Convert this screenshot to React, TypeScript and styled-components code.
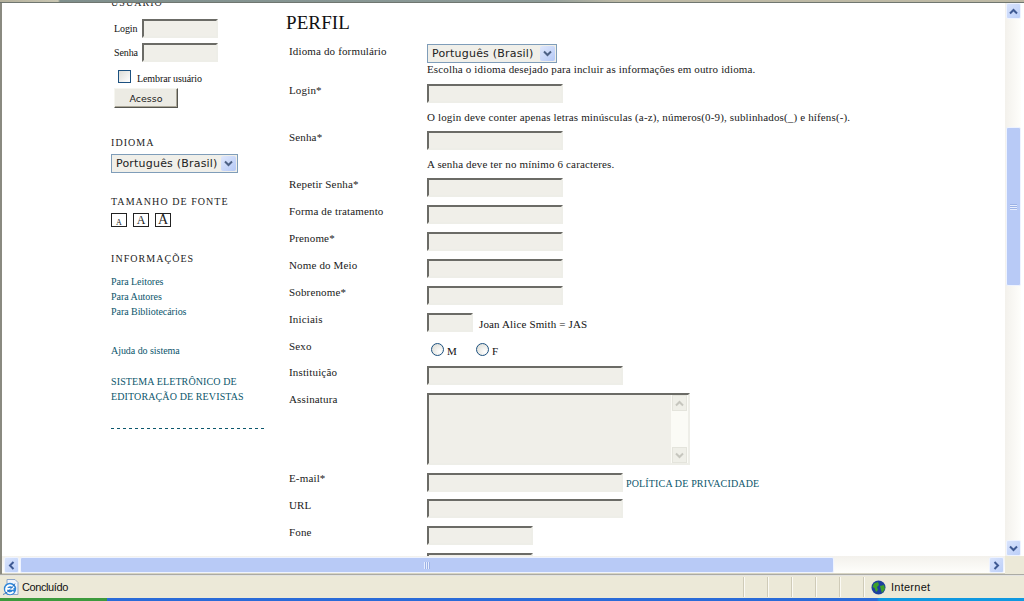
import React from "react";
import styled, { createGlobalStyle } from "styled-components";

const Global = createGlobalStyle`
  html, body { margin: 0; padding: 0; width: 1024px; height: 601px; overflow: hidden; background: #fff; }
  * { box-sizing: border-box; }
`;
const Screen = styled.div`
  width: 1024px; height: 601px; display: flex; flex-direction: column; overflow: hidden;
  font-family: "Liberation Serif", serif; font-size: 12px; color: #111;
`;
const TopStrip = styled.div`
  height: 3px; flex: none;
  background: linear-gradient(90deg, #b4b09c 0, #c9c6b2 58px, #7f8f8c 60px, #8d9b98 540px, #bdb9a5 620px, #bdb9a5 100%);
  border-bottom: 1px solid #6f7670;
`;
const Middle = styled.div`
  flex: none; height: 553px; display: flex; border-left: 2px solid #8a8a80; background: #fff;
`;
const Viewport = styled.div`
  width: 1003px; flex: none; overflow: hidden; background: #fff;
`;
const Page = styled.div`
  display: flex; padding-left: 109px; margin-top: -6px;
`;
const Side = styled.div`
  width: 175px; flex: none; display: flex; flex-direction: column; align-items: flex-start;
`;
const SideTitle = styled.div<{ $mt?: number }>`
  font-size: 10px; letter-spacing: 1.05px; line-height: 12px; color: #222; margin-top: ${p => p.$mt ?? 0}px;
`;
const LoginBlock = styled.div`
  display: flex; flex-direction: column; gap: 5px; margin-top: 10px;
`;
const LoginRow = styled.div`
  display: flex; align-items: center; padding-left: 3px; height: 19px; font-size: 10px; letter-spacing: -.1px;
`;
const LoginLabel = styled.span`
  width: 28px; flex: none;
`;
const LoginInput = styled.input`
  width: 76px; height: 19px; background: #f0efe9; padding: 0; outline: 0;
  border: 2px solid; border-color: #6b6b66 #eeeee8 #eeeee8 #6b6b66;
`;
const RememberRow = styled.label`
  display: flex; align-items: center; gap: 6px; margin: 7px 0 0 7px; height: 15px; font-size: 10px; letter-spacing: -.1px;
`;
const RememberText = styled.span`
  margin-top: 3px;
`;
const FakeCheck = styled.span`
  width: 13px; height: 13px; border: 1px solid #1c5180; background: linear-gradient(135deg, #dcdcd7, #fff); display: block;
`;
const AccessBtn = styled.button`
  width: 64px; height: 20px; margin: 4px 0 0 3px; padding: 0; background: #ecebe4; color: #222;
  font: 9.5px "DejaVu Sans", sans-serif;
  border: 1px solid; border-color: #f6f6f0 #55554f #55554f #f6f6f0; box-shadow: inset -1px -1px 0 #aca899;
`;
const SideSelect = styled.div`
  margin-top: 5px;
`;
const FontRow = styled.div`
  display: flex; gap: 6px; align-items: flex-end; margin-top: 5px;
`;
const FontBox = styled.span<{ $f: number }>`
  width: 16px; height: 14px; border: 1px solid #222; display: flex; align-items: flex-end; justify-content: center;
  font-size: ${p => p.$f}px; line-height: ${p => p.$f - 1}px; color: #222;
`;
const LinkList = styled.div`
  display: flex; flex-direction: column; gap: 3px; margin-top: 11px;
`;
const SmallLink = styled.a<{ $mt?: number }>`
  font-size: 10px; line-height: 12px; color: #0b566c; letter-spacing: -.05px; display: block; margin-top: ${p => p.$mt ?? 0}px;
`;
const CapBlock = styled.div`
  margin-top: 17px;
`;
const CapLink = styled.a`
  font-size: 10px; line-height: 15px; color: #0b566c; letter-spacing: .12px; display: block; white-space: nowrap;
`;
const PolicyLink = styled(CapLink)`
  margin: 2px 0 0 3px; letter-spacing: .15px;
`;
const Dashes = styled.div`
  width: 153px; height: 1px; margin-top: 24px;
  background: repeating-linear-gradient(90deg, #0b566c 0 3px, transparent 3px 6px);
`;
const Main = styled.div`
  width: 700px; flex: none;
`;
const Title = styled.h2`
  margin: 14px 0 0 0; font: 400 19px/24px "Liberation Serif", serif; letter-spacing: .1px; color: #111;
`;
const Rows = styled.div`
  margin: 9px 0 0 3px; display: flex; flex-direction: column;
`;
const Row = styled.div<{ $mb?: number }>`
  display: flex; margin-bottom: ${p => p.$mb ?? 8}px;
`;
const Label = styled.div<{ $up?: number }>`
  width: 138px; flex: none; line-height: 14px; margin-top: ${p => -(p.$up ?? 1)}px; font-size: 11px; letter-spacing: .15px; color: #1a1a1a; white-space: nowrap;
`;
const Field = styled.div`
  display: flex; flex-direction: column; align-items: flex-start;
`;
const Inline = styled.div`
  display: flex; align-items: center; height: 19px; font-size: 11px; letter-spacing: .14px; white-space: nowrap;
`;
const Hint = styled.span`
  margin: 2px 0 0 6px;
`;
const Help = styled.div<{ $mt: number }>`
  font-size: 11px; line-height: 13px; letter-spacing: .15px; margin-top: ${p => p.$mt}px; white-space: nowrap; color: #1a1a1a;
`;
const TextInput = styled.input<{ $w: number }>`
  width: ${p => p.$w}px; height: 19px; padding: 0; outline: 0; background: #f0efe9; flex: none;
  border: 2px solid; border-color: #6b6b66 #eeeee8 #eeeee8 #6b6b66;
`;
const Area = styled.div`
  width: 263px; height: 72px; background: #f0efe9;
  border: 2px solid; border-color: #6b6b66 #eeeee8 #eeeee8 #6b6b66; display: flex; justify-content: flex-end;
`;
const AreaBar = styled.div`
  width: 17px; background: #fbfbf6; display: flex; flex-direction: column; justify-content: space-between;
`;
const AreaBtn = styled.div`
  width: 15px; height: 16px; margin-left: 1px; border: 1px solid #e4e4dc; background: #efefe8;
  display: flex; align-items: center; justify-content: center;
`;
const Radio = styled.span`
  width: 13px; height: 13px; border-radius: 50%; border: 1px solid #1c5180; background: radial-gradient(circle at 70% 70%, #fff, #d8d8d0); display: block;
`;
const RadioLabel = styled.span`
  display: flex; align-items: center; gap: 3px; margin-left: 4px; margin-right: 15px; font-size: 11px;
`;
const RadioText = styled.span`
  margin-top: 2px;
`;
const SelectBox = styled.div<{ $w: number }>`
  width: ${p => p.$w}px; height: 19px; border: 1px solid #7f9db9; background: #f0efe9; padding: 1px;
  display: flex; align-items: center; justify-content: space-between;
  font: 11px "DejaVu Sans", sans-serif; color: #222; letter-spacing: .2px;
`;
const SelectText = styled.span`
  padding-left: 3px; white-space: nowrap;
`;
const SelectBtn = styled.span`
  width: 15px; height: 15px; background: linear-gradient(135deg, #e0e8fc, #b4c8f6); border-radius: 2px;
  display: flex; align-items: center; justify-content: center; flex: none;
`;
const VBar = styled.div`
  width: 16px; flex: none; background: linear-gradient(90deg, #f3f1ec, #fefefb); display: flex; flex-direction: column; position: relative; padding-left: 1px;
`;
const SBtn = styled.div`
  width: 15px; height: 16px; flex: none; border: 1px solid #eef3ff; border-radius: 2px;
  background: linear-gradient(135deg, #d8e3fc, #bccff8); display: flex; align-items: center; justify-content: center;
`;
const VThumb = styled.div`
  position: absolute; left: 1px; top: 124px; width: 15px; height: 159px; background: #b8caf6;
  border: 1px solid #eef3ff; border-radius: 2px; display: flex; align-items: center; justify-content: center;
`;
const Grip = styled.div<{ $v?: boolean }>`
  width: ${p => (p.$v ? 6 : 7)}px; height: ${p => (p.$v ? 7 : 6)}px;
  background: ${p => p.$v
    ? "repeating-linear-gradient(90deg,#e6edfe 0 1px,#9cb2e6 1px 2px)"
    : "repeating-linear-gradient(0deg,#e6edfe 0 1px,#9cb2e6 1px 2px)"};
`;
const Spacer = styled.div` flex: 1; `;
const HRow = styled.div`
  height: 18px; flex: none; display: flex; border-left: 2px solid #8a8a80;
`;
const HBar = styled.div`
  width: 1003px; flex: none; padding: 1px 1px 0 2px; display: flex; position: relative;
  background: linear-gradient(180deg, #f3f1ec, #fefefb); border-bottom: 1px solid #d8d5c4;
`;
const HThumb = styled.div`
  width: 814px; height: 16px; margin-left: 1px; background: #b8caf6; border: 1px solid #eef3ff; border-radius: 2px;
  display: flex; align-items: center; justify-content: center;
`;
const Corner = styled.div` flex: 1; background: #ece9d8; `;
const Divider = styled.div` height: 2px; flex: none; background: linear-gradient(#8f8f86, #fff); `;
const Status = styled.div`
  flex: none; height: 22px; background: #ece9d8; display: flex; align-items: center;
  font: 11px "Liberation Sans", sans-serif; color: #111;
`;
const StatusMain = styled.div`
  width: 700px; display: flex; align-items: center; gap: 3px; padding-left: 2px; flex: none; letter-spacing: -.4px;
`;
const Seg = styled.div<{ $w: number }>`
  width: ${p => p.$w}px; height: 20px; flex: none; border-right: 1px solid #fbfaf4; box-shadow: inset -1px 0 0 #cfcbb8;
`;
const Net = styled.div`
  display: flex; align-items: center; gap: 5px; padding-left: 6px; letter-spacing: .25px;
`;
const Task = styled.div`
  flex: 1; display: flex;
`;
const TaskGreen = styled.div` width: 107px; background: #3d9a3d; `;
const TaskBlue = styled.div` flex: 1; background: linear-gradient(90deg, #2a6bd8, #2a6bd8 770px, #0f98e0 772px); `;

const Chev = ({ d, c = "#3f5a93" }: { d: string; c?: string }) => (
  <svg width="9" height="9" viewBox="0 0 9 9"><path d={d} fill="none" stroke={c} strokeWidth="2" /></svg>
);
const UP = "M1 6.5 4.5 3 8 6.5";
const DOWN = "M1 2.5 4.5 6 8 2.5";
const LEFT = "M6.5 1 3 4.5 6.5 8";
const RIGHT = "M2.5 1 6 4.5 2.5 8";

const Select = ({ w }: { w: number }) => (
  <SelectBox $w={w}>
    <SelectText>Português (Brasil)</SelectText>
    <SelectBtn><Chev d={DOWN} c="#4d6185" /></SelectBtn>
  </SelectBox>
);

const IeIcon = () => (
  <svg width="17" height="17" viewBox="0 0 17 17">
    <path d="M5 .5h8l3 3v12H5z" fill="#f0f4fa" stroke="#8fa6c8" />
    <circle cx="8" cy="10" r="6.2" fill="#2f86d8" />
    <path d="M4.5 9.8h7M11.4 12.4A4 4 0 1 1 11.8 9" fill="none" stroke="#fff" strokeWidth="1.8" />
    <path d="M1 15.5c3-1 9-6 12-11" fill="none" stroke="#1f5fb0" strokeWidth=".8" />
  </svg>
);
const Globe = () => (
  <svg width="15" height="15" viewBox="0 0 15 15">
    <circle cx="7.5" cy="7.5" r="7" fill="#1d3f9e" />
    <path d="M3 3.5 7 2 8 5 6 7 7 10 5 12 3.5 8 1.5 7zM9 6l4-1 1 4-3 4-1-3z" fill="#3ea02a" />
  </svg>
);

export default function App() {
  return (
    <Screen>
      <Global />
      <TopStrip />
      <Middle>
        <Viewport>
          <Page>
            <Side>
              <SideTitle>USUÁRIO</SideTitle>
              <LoginBlock>
                <LoginRow><LoginLabel>Login</LoginLabel><LoginInput aria-label="Login" /></LoginRow>
                <LoginRow><LoginLabel>Senha</LoginLabel><LoginInput aria-label="Senha" /></LoginRow>
              </LoginBlock>
              <RememberRow><FakeCheck /><RememberText>Lembrar usuário</RememberText></RememberRow>
              <AccessBtn>Acesso</AccessBtn>
              <SideTitle $mt={29}>IDIOMA</SideTitle>
              <SideSelect><Select w={127} /></SideSelect>
              <SideTitle $mt={23}>TAMANHO DE FONTE</SideTitle>
              <FontRow>
                <FontBox $f={8}>A</FontBox>
                <FontBox $f={12}>A</FontBox>
                <FontBox $f={14}>A</FontBox>
              </FontRow>
              <SideTitle $mt={26}>INFORMAÇÕES</SideTitle>
              <LinkList>
                <SmallLink>Para Leitores</SmallLink>
                <SmallLink>Para Autores</SmallLink>
                <SmallLink>Para Bibliotecários</SmallLink>
              </LinkList>
              <SmallLink $mt={27}>Ajuda do sistema</SmallLink>
              <CapBlock>
                <CapLink>SISTEMA ELETRÔNICO DE</CapLink>
                <CapLink>EDITORAÇÃO DE REVISTAS</CapLink>
              </CapBlock>
              <Dashes />
            </Side>
            <Main>
              <Title>PERFIL</Title>
              <Rows>
                <Row>
                  <Label $up={0}>Idioma do formulário</Label>
                  <Field>
                    <Select w={130} />
                    <Help $mt={0}>Escolha o idioma desejado para incluir as informações em outro idioma.</Help>
                  </Field>
                </Row>
                <Row $mb={7}>
                  <Label>Login*</Label>
                  <Field>
                    <TextInput $w={136} />
                    <Help $mt={8}>O login deve conter apenas letras minúsculas (a-z), números(0-9), sublinhados(_) e hífens(-).</Help>
                  </Field>
                </Row>
                <Row $mb={7}>
                  <Label>Senha*</Label>
                  <Field>
                    <TextInput $w={136} />
                    <Help $mt={8}>A senha deve ter no mínimo 6 caracteres.</Help>
                  </Field>
                </Row>
                <Row><Label>Repetir Senha*</Label><Field><TextInput $w={136} /></Field></Row>
                <Row><Label>Forma de tratamento</Label><Field><TextInput $w={136} /></Field></Row>
                <Row><Label>Prenome*</Label><Field><TextInput $w={136} /></Field></Row>
                <Row><Label>Nome do Meio</Label><Field><TextInput $w={136} /></Field></Row>
                <Row><Label>Sobrenome*</Label><Field><TextInput $w={136} /></Field></Row>
                <Row>
                  <Label>Iniciais</Label>
                  <Inline><TextInput $w={46} /><Hint>Joan Alice Smith = JAS</Hint></Inline>
                </Row>
                <Row $mb={7}>
                  <Label>Sexo</Label>
                  <Inline>
                    <RadioLabel><Radio /><RadioText>M</RadioText></RadioLabel>
                    <RadioLabel><Radio /><RadioText>F</RadioText></RadioLabel>
                  </Inline>
                </Row>
                <Row><Label>Instituição</Label><Field><TextInput $w={196} /></Field></Row>
                <Row>
                  <Label>Assinatura</Label>
                  <Area>
                    <AreaBar>
                      <AreaBtn><Chev d={UP} c="#c6c6be" /></AreaBtn>
                      <AreaBtn><Chev d={DOWN} c="#c6c6be" /></AreaBtn>
                    </AreaBar>
                  </Area>
                </Row>
                <Row $mb={7}>
                  <Label $up={2}>E-mail*</Label>
                  <Inline>
                    <TextInput $w={196} />
                    <PolicyLink>POLÍTICA DE PRIVACIDADE</PolicyLink>
                  </Inline>
                </Row>
                <Row><Label>URL</Label><Field><TextInput $w={196} /></Field></Row>
                <Row><Label>Fone</Label><Field><TextInput $w={106} /></Field></Row>
                <Row><Label>Fax</Label><Field><TextInput $w={106} /></Field></Row>
              </Rows>
            </Main>
          </Page>
        </Viewport>
        <VBar>
          <SBtn><Chev d={UP} /></SBtn>
          <VThumb><Grip /></VThumb>
          <Spacer />
          <SBtn><Chev d={DOWN} /></SBtn>
        </VBar>
      </Middle>
      <HRow>
        <HBar>
          <SBtn><Chev d={LEFT} /></SBtn>
          <HThumb><Grip $v /></HThumb>
          <Spacer />
          <SBtn><Chev d={RIGHT} /></SBtn>
        </HBar>
        <Corner />
      </HRow>
      <Divider />
      <Status>
        <StatusMain><IeIcon />Concluído</StatusMain>
        <Seg $w={45} /><Seg $w={24} /><Seg $w={24} /><Seg $w={24} /><Seg $w={24} /><Seg $w={24} />
        <Net><Globe />Internet</Net>
      </Status>
      <Task><TaskGreen /><TaskBlue /></Task>
    </Screen>
  );
}
